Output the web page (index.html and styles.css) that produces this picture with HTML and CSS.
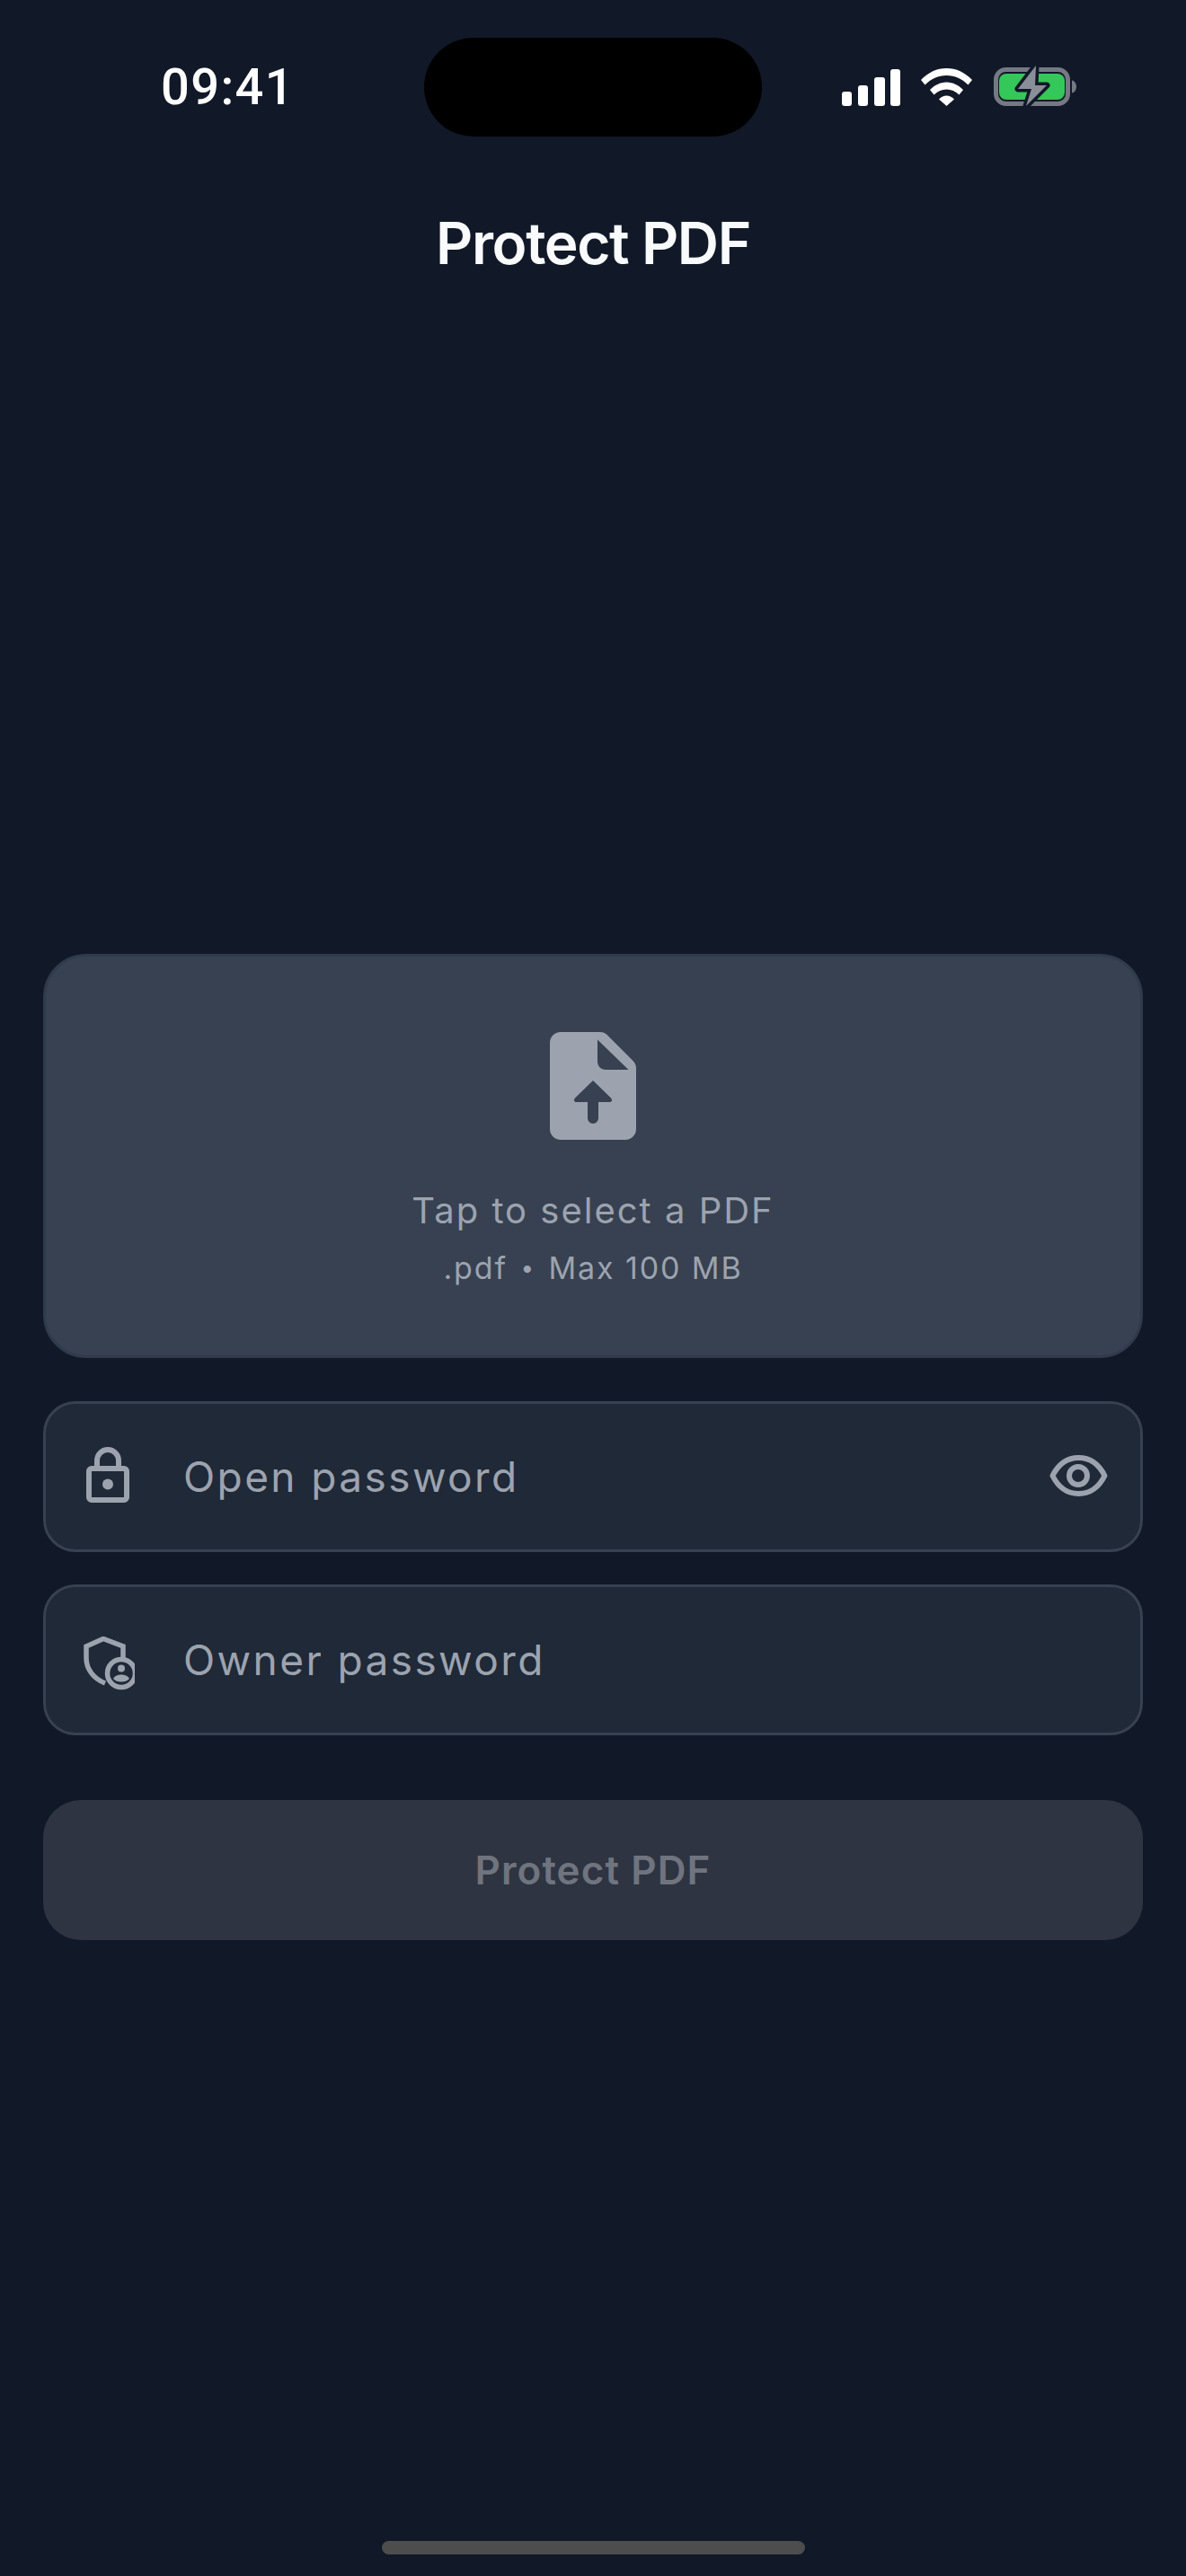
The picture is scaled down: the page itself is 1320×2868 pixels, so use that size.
FILE: index.html
```html
<!DOCTYPE html>
<html>
<head>
  <title>Protect PDF</title>
  <link rel="stylesheet" href="styles.css">
</head>
<body>
  <div class="statusBar">
    <span class="time">09:41</span>
    <div class="island"></div>
    <div class="statusIcons">
      <svg class="signal" width="65" height="41" viewBox="0 0 65 41" fill="#fff">
        <rect x="0" y="25" width="11" height="16" rx="3"/>
        <rect x="18" y="18" width="11" height="23" rx="3"/>
        <rect x="36" y="9" width="12" height="32" rx="3"/>
        <rect x="54" y="0" width="11" height="41" rx="3"/>
      </svg>
      <svg class="wifi" width="57" height="42" viewBox="0 0 57 42" fill="#fff">
        <path d="M0 13C8 4.500 18 0 28.500 0S49 4.500 57 13L52.500 18.500C46 12 37.500 8 28.500 8S11 12 4.500 18.500Z"/>
        <path d="M10 24C15 19 21.500 15.500 28.500 15.500S42 19 47 24L42.500 29.500C38.500 25.500 33.500 23.500 28.500 23.500S18.500 25.500 14.500 29.500Z"/>
        <path d="M20 34.500C22.500 32 25.500 30.500 28.500 30.500S34.500 32 37 34.500L28.500 42Z"/>
      </svg>
      <svg class="battery" width="92" height="43" viewBox="0 0 92 43">
        <rect x="2.500" y="2.500" width="80" height="38" rx="11" fill="none" stroke="#757984" stroke-width="5"/>
        <rect x="6" y="7" width="73" height="29" rx="8" fill="#34c759"/>
        <path d="M87 14.500C90 15 92 18 92 21.500S90 28 87 28.500Z" fill="#757984"/>
        <path d="M47 -2L27 24H42L36 43L59 20H46Z" fill="#8a8e98" stroke="#111827" stroke-width="7" stroke-linejoin="round" paint-order="stroke"/>
      </svg>
    </div>
  </div>

  <h1 class="title">Protect PDF</h1>

  <div class="content">
    <div class="dropZone">
      <svg class="fileIcon" width="96" height="120" viewBox="0 0 96 120">
        <path d="M12 0H56C59 0 61.500 1 63.500 3L92 31.500C94.500 34 96 37 96 40V108C96 114.600 90.600 120 84 120H12C5.400 120 0 114.600 0 108V12C0 5.400 5.400 0 12 0Z" fill="#9ca3af"/>
        <path d="M53 8.500L87.500 42H62C57 42 53 38 53 33Z" fill="#374151"/>
        <path d="M48 54L68 73.500C70 76 69 78 66 78H54V96A6 6 0 0 1 42 96V78H30C27 78 26 76 28 73.500Z" fill="#374151"/>
      </svg>
      <div class="dropTitle">Tap to select a PDF</div>
      <div class="dropHint">.pdf <span class="dot">&bull;</span> Max 100 MB</div>
    </div>

    <div class="field">
      <svg class="lockIcon" width="60" height="62" viewBox="0 0 60 62" fill="none" stroke="#9ca3af" stroke-width="6">
        <rect x="9" y="24" width="42" height="35" rx="3"/>
        <path d="M18 24V15A12 12 0 0 1 42 15V24"/>
        <circle cx="30" cy="41.500" r="6" fill="#9ca3af" stroke="none"/>
      </svg>
      <span class="fieldLabel">Open password</span>
      <svg class="eye" width="65" height="46" viewBox="0 0 65 46" fill="none" stroke="#9ca3af" stroke-width="6">
        <path d="M3.500 23C10 10 20 3 32.500 3S55 10 61.500 23C55 36 45 43 32.500 43S10 36 3.500 23Z" stroke-linejoin="round"/>
        <circle cx="32" cy="23" r="10"/>
      </svg>
    </div>

    <div class="field">
      <svg class="shieldIcon" width="60" height="60" viewBox="-3 0 60 60" fill="none" stroke="#9ca3af" stroke-width="5.500">
        <path d="M44 26V11L22 2.500L3 11V24C3 36 11 47 24 52"/>
        <circle cx="42" cy="41" r="15.500"/>
        <circle cx="42" cy="35.500" r="4" fill="#9ca3af" stroke="none"/>
        <path d="M33 47C35 43.500 38.500 42.500 42 42.500S49 43.500 51 47C49 49.500 45.500 50.500 42 50.500S35 49.500 33 47Z" fill="#9ca3af" stroke="none"/>
      </svg>
      <span class="fieldLabel">Owner password</span>
    </div>

    <div class="submit">Protect PDF</div>
  </div>

  <div class="homeBar"></div>
</body>
</html>
```

FILE: styles.css
```css
html, body {
  margin: 0;
  padding: 0;
}

body {
  width: 1320px;
  height: 2868px;
  background-color: #111827;
  font-family: Inter, "Liberation Sans", sans-serif;
  display: flex;
  flex-direction: column;
  overflow: hidden;
}

.statusBar {
  display: grid;
  grid-template-columns: 472px 376px 472px;
  height: 152px;
  padding-top: 42px;
  box-sizing: border-box;
}

.time {
  color: #fff;
  font-family: Roboto, "Liberation Sans", sans-serif;
  font-size: 56px;
  font-weight: 500;
  letter-spacing: 1.4px;
  line-height: 110px;
  padding-left: 179px;
}

.island {
  height: 110px;
  background-color: #000;
  border-radius: 55px;
}

.statusIcons {
  display: flex;
  align-items: flex-end;
  height: 76px;
  padding-left: 89px;
  gap: 23px;
}

.battery {
  margin-left: 1px;
  overflow: visible;
}

.title {
  margin: 84px 0 0;
  text-align: center;
  color: #f9fafb;
  font-size: 64px;
  font-weight: 600;
  letter-spacing: -1.4px;
  line-height: 70px;
}

.content {
  display: flex;
  flex-direction: column;
  padding: 0 48px;
  margin-top: 756px;
}

.dropZone {
  display: flex;
  flex-direction: column;
  align-items: center;
  height: 450px;
  box-sizing: border-box;
  padding-top: 84px;
  background-color: #374151;
  border: 3px solid #2f3a4a;
  border-radius: 48px;
}

.dropTitle {
  margin-top: 53px;
  color: #9ca3af;
  font-size: 40px;
  line-height: 52px;
  letter-spacing: 2px;
}

.dropHint {
  margin-top: 16px;
  color: #9ca3af;
  font-size: 34px;
  line-height: 44px;
  letter-spacing: 1.9px;
}

.dot {
  padding: 0 3px;
  font-size: 26px;
  vertical-align: 3px;
}

.field {
  display: flex;
  align-items: center;
  height: 168px;
  box-sizing: border-box;
  margin-top: 36px;
  padding: 0 36px 0 39px;
  background-color: #1f2937;
  border: 3px solid #374151;
  border-radius: 36px;
}

.dropZone + .field {
  margin-top: 48px;
}

.lockIcon {
  margin-top: -4px;
}

.shieldIcon {
  margin-top: 7px;
}

.eye {
  margin-top: -3px;
}

.fieldLabel {
  flex: 1;
  margin-left: 54px;
  color: #9ca3af;
  font-size: 46px;
  letter-spacing: 2.4px;
}

.submit {
  height: 156px;
  margin-top: 72px;
  background-color: #2e3441;
  border-radius: 42px;
  color: #6f747f;
  font-size: 44px;
  font-weight: 600;
  letter-spacing: 1.1px;
  line-height: 156px;
  text-align: center;
}

.homeBar {
  width: 471px;
  height: 15px;
  margin: auto auto 24px;
  background-color: #4d4d4d;
  border-radius: 8px;
}
```
